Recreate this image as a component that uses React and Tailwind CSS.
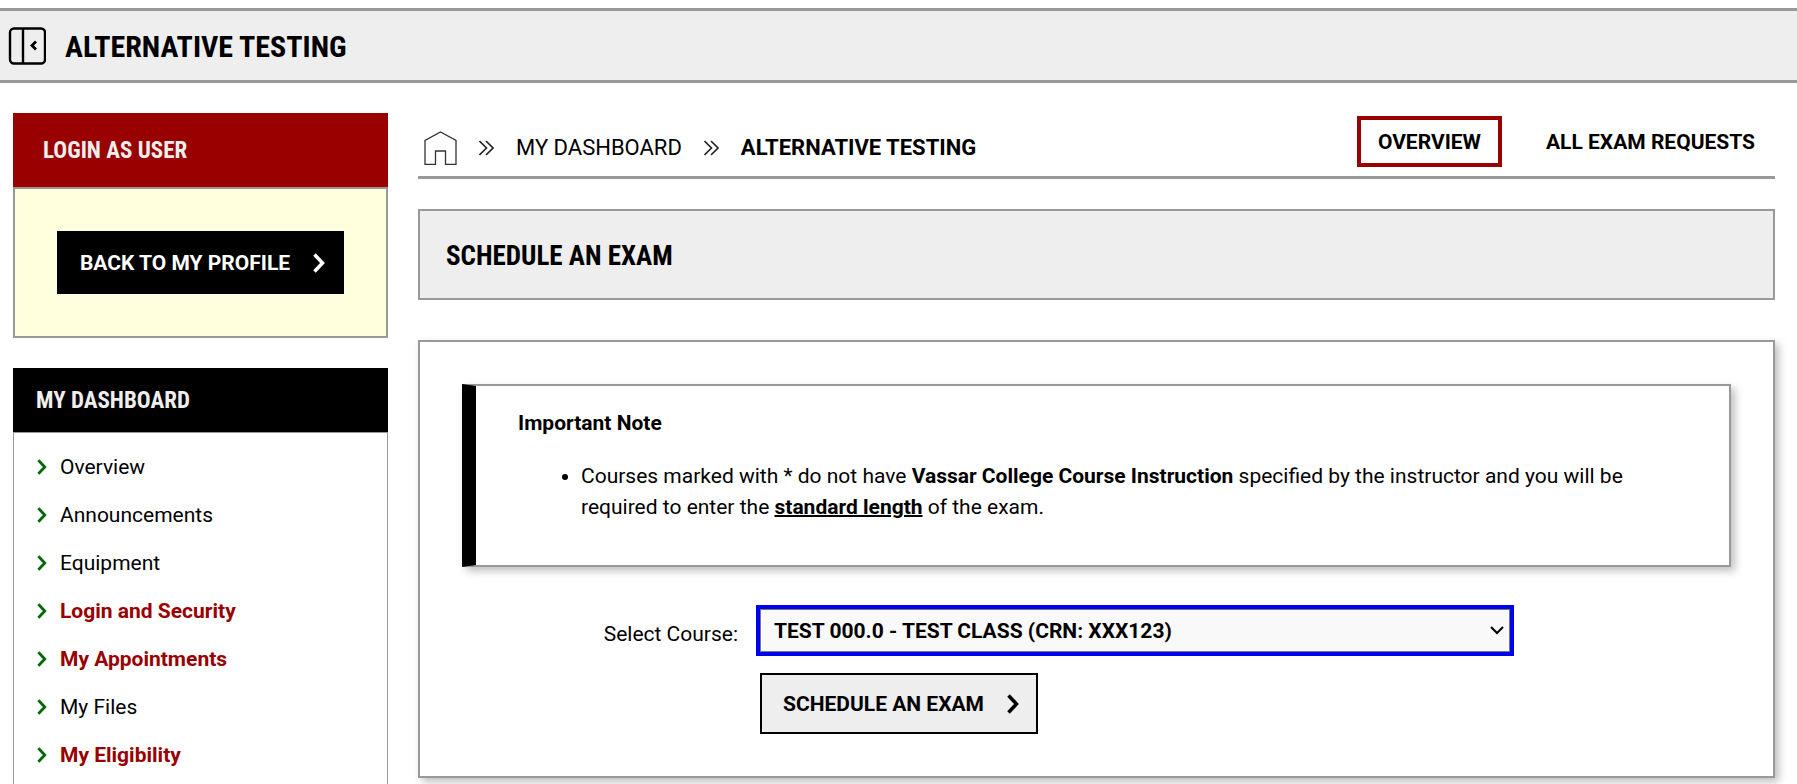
const navItems = [
  { label: 'Overview' },
  { label: 'Announcements' },
  { label: 'Equipment' },
  { label: 'Login and Security', highlight: true },
  { label: 'My Appointments', highlight: true },
  { label: 'My Files' },
  { label: 'My Eligibility', highlight: true },
]

function Chevron({ className, strokeWidth = 3.5 }) {
  return (
    <svg viewBox="0 0 12 20" className={className} fill="none" stroke="currentColor" strokeWidth={strokeWidth} aria-hidden="true">
      <path d="M1.500 1.500 9.500 10l-8 8.500" />
    </svg>
  )
}

function DoubleChevron() {
  return (
    <svg viewBox="0 0 15 16" className="h-4 w-[15px] shrink-0" fill="none" stroke="#222" strokeWidth="1.600" aria-hidden="true">
      <path d="M.500 1l7 7-7 7M7 1l7 7-7 7" />
    </svg>
  )
}

function Header() {
  return (
    <header className="mt-2 flex h-[75px] items-center gap-[19px] border-y-[3px] border-[#999] bg-[#eee] pl-2">
      <button type="button" aria-label="Toggle sidebar">
        <svg viewBox="0 0 38 38" className="h-[38px] w-[38px]" fill="none" stroke="#000" strokeWidth="2.400" aria-hidden="true">
          <rect x="2" y="1.500" width="35" height="35" rx="4" />
          <path d="M15 1.500v35" />
          <path d="M28 14.500 24 18.500l4 4" strokeWidth="2.800" />
        </svg>
      </button>
      <h1 className="pt-[3px] font-['Roboto_Condensed',Roboto,sans-serif] text-[30px] leading-9 font-bold">ALTERNATIVE TESTING</h1>
    </header>
  )
}

function Sidebar() {
  return (
    <aside className="w-[375px] shrink-0">
      <section>
        <h2 className="bg-[#900] px-[30px] pt-[23px] pb-[21px] font-['Roboto_Condensed',Roboto,sans-serif] text-[23px] leading-[30px] font-bold text-[#eee]">
          LOGIN AS USER
        </h2>
        <div className="flex justify-center border-2 border-[#999] bg-[#ffffde] py-[42px]">
          <button type="button" className="flex h-[63px] items-center gap-[23px] border-2 border-black bg-black pr-[17px] pl-[21px] font-bold text-white">
            BACK TO MY PROFILE
            <Chevron className="h-5 w-3" />
          </button>
        </div>
      </section>
      <nav className="mt-[30px]">
        <h2 className="bg-black px-[23px] pt-[18px] pb-4 font-['Roboto_Condensed',Roboto,sans-serif] text-[23px] leading-[30px] font-bold text-[#eee]">
          MY DASHBOARD
        </h2>
        <ul className="border border-[#999] pt-[10px] pb-6 pl-[23px]">
          {navItems.map((item) => (
            <li key={item.label}>
              <a href="#" className={`flex h-12 items-center gap-[13px] ${item.highlight ? 'font-bold text-[#900]' : ''}`}>
                <Chevron className="h-4 w-[10px] text-[#060]" strokeWidth={3.4} />
                {item.label}
              </a>
            </li>
          ))}
        </ul>
      </nav>
    </aside>
  )
}

function Breadcrumb() {
  return (
    <div className="flex h-[66px] items-end justify-between border-b-[3px] border-[#999]">
      <nav aria-label="Breadcrumb" className="flex items-center gap-[22px] pb-[11px] pl-[6px] text-[22px] leading-8">
        <a href="#" aria-label="Home">
          <svg viewBox="0 0 33 34" className="h-[34px] w-[33px]" fill="none" stroke="#333" strokeWidth="1.300" aria-hidden="true">
            <path d="M1 33.300V9.500L16.500 1 32 9.500v23.800H21.500V20h-10v13.300z" />
          </svg>
        </a>
        <DoubleChevron />
        <a href="#">MY DASHBOARD</a>
        <DoubleChevron />
        <span className="font-bold">ALTERNATIVE TESTING</span>
      </nav>
      <nav className="flex items-center gap-6 pb-[9px] font-bold">
        <a href="#" className="border-4 border-[#900] px-[17px] pt-[7px] pb-[6px]">OVERVIEW</a>
        <a href="#" className="px-5">ALL EXAM REQUESTS</a>
      </nav>
    </div>
  )
}

function ImportantNote() {
  return (
    <div className="border-2 border-l-[14px] border-[#999] border-l-black px-[42px] pt-[22px] pb-[42px] leading-[31px] shadow-[4px_4px_8px_rgba(0,0,0,0.25)]">
      <p className="font-bold">Important Note</p>
      <ul className="mt-[22px] list-disc pl-[63px] pr-10">
        <li>
          Courses marked with * do not have <strong>Vassar College Course Instruction</strong> specified by the instructor and you will be
          required to enter the <strong className="underline decoration-2">standard length</strong> of the exam.
        </li>
      </ul>
    </div>
  )
}

function CourseForm() {
  return (
    <form className="mt-[38px] grid grid-cols-[276px_1fr] gap-x-[18px] gap-y-[17px]" onSubmit={(e) => e.preventDefault()}>
      <label htmlFor="course" className="self-center pt-1.5 text-right">Select Course:</label>
      <div className="relative mr-[217px] flex border-4 border-[#00e]">
        <select id="course" className="h-[43px] w-full appearance-none border border-[#767676] bg-[#f9f9f9] px-[13px] font-bold">
          <option>TEST 000.0 - TEST CLASS (CRN: XXX123)</option>
        </select>
        <svg viewBox="0 0 14 9" className="pointer-events-none absolute top-[17px] right-1.5 h-[9px] w-[14px]" fill="none" stroke="#000" strokeWidth="2" aria-hidden="true">
          <path d="M1 1l6 6 6-6" />
        </svg>
      </div>
      <button type="submit" className="col-start-2 ml-1 flex h-[61px] items-center gap-[23px] justify-self-start border-2 border-black bg-[#eee] pr-[17px] pl-[21px] font-bold">
        SCHEDULE AN EXAM
        <Chevron className="h-5 w-3" />
      </button>
    </form>
  )
}

export default function App() {
  return (
    <div className="flow-root bg-white font-[Roboto,sans-serif] text-[21px] leading-[30px] text-black">
      <Header />
      <div className="flex gap-[30px] pt-[30px] pr-[22px] pl-[13px]">
        <Sidebar />
        <main className="min-w-0 flex-1">
          <Breadcrumb />
          <h2 className="mt-[30px] border-2 border-[#999] bg-[#eee] px-[26px] pt-[28px] pb-[24px] font-['Roboto_Condensed',Roboto,sans-serif] text-[27px] leading-[35px] font-bold">
            SCHEDULE AN EXAM
          </h2>
          <section className="mt-10 border-2 border-[#999] p-[42px] shadow-[4px_4px_8px_rgba(0,0,0,0.25)]">
            <ImportantNote />
            <CourseForm />
          </section>
        </main>
      </div>
    </div>
  )
}
